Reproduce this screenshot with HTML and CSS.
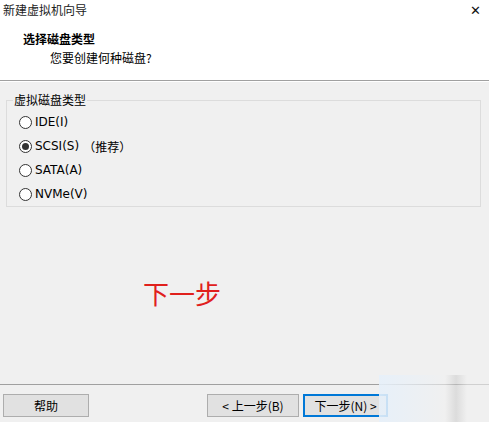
FILE: index.html
```html
<!DOCTYPE html>
<html lang="zh-CN">
<head>
    <meta charset="UTF-8">
    <title>新建虚拟机向导</title>
    <link rel="stylesheet" href="styles.css">
</head>
<body>
    <div class="dialog">
        <div class="top">
            <div class="titlebar">
                <span class="title">新建虚拟机向导</span>
                <span class="close">&#x2715;</span>
            </div>
            <div class="header">
                <div class="heading">选择磁盘类型</div>
                <div class="subheading">您要创建何种磁盘?</div>
            </div>
        </div>

        <div class="body">
            <fieldset class="group">
                <legend>虚拟磁盘类型</legend>
                <label class="option"><span class="radio"></span>IDE(I)</label>
                <label class="option"><span class="radio checked"></span>SCSI(S) <span class="note">（推荐）</span></label>
                <label class="option"><span class="radio"></span>SATA(A)</label>
                <label class="option"><span class="radio"></span>NVMe(V)</label>
            </fieldset>

            <div class="hint">下一步</div>
        </div>

        <div class="footer">
            <button class="btn help">帮助</button>
            <div class="nav">
                <button class="btn back">&lt; 上一步(B)</button>
                <button class="btn next">下一步(N) &gt;</button>
            </div>
            <div class="blur"></div>
        </div>
    </div>
</body>
</html>
```

FILE: styles.css
```css
* {
    box-sizing: border-box;
}

body {
    margin: 0;
    background-color: #f0f0f0;
    font-family: "Noto Sans CJK SC", "Liberation Sans", sans-serif;
    font-size: 12px;
    color: #000;
}

.dialog {
    width: 489px;
    height: 422px;
    display: flex;
    flex-direction: column;
    overflow: hidden;
}

.top {
    background-color: #fff;
    height: 81px;
    border-bottom: 1px solid #a0a0a0;
}

.titlebar {
    height: 22px;
    display: flex;
    justify-content: space-between;
    align-items: center;
    padding: 0 8px 4px 3px;
}

.title {
    font-size: 12px;
    color: #222;
}

.close {
    font-size: 13px;
    font-weight: 300;
    color: #111;
}

.header {
    padding: 9px 0 0 23px;
}

.heading {
    font-weight: bold;
    font-size: 12px;
    line-height: 16px;
}

.subheading {
    padding-left: 27px;
    line-height: 20px;
    margin-top: 1px;
}

.body {
    flex: 1;
    padding: 10px 8px 0 6px;
    border-top: 1px solid #fff;
}

.group {
    margin: 0;
    height: 115px;
    border: 1px solid #dcdcdc;
    padding: 2px 0 0 12px;
}

.group legend {
    padding: 0 1px;
    margin-left: -6px;
    line-height: 16px;
}

.option {
    display: flex;
    align-items: center;
    height: 24px;
    font-family: "DejaVu Sans", "Noto Sans CJK SC", sans-serif;
    font-size: 12px;
}

.radio {
    width: 13px;
    height: 13px;
    border: 1px solid #333;
    border-radius: 50%;
    background-color: #fff;
    margin-right: 3px;
    display: flex;
    align-items: center;
    justify-content: center;
}

.radio.checked::after {
    content: "";
    width: 7px;
    height: 7px;
    border-radius: 50%;
    background-color: #333;
}

.note {
    margin-left: 4px;
    font-family: "Noto Sans CJK SC", sans-serif;
}

.hint {
    margin: 69px 0 0 137px;
    color: #e0201c;
    font-size: 26px;
    line-height: 34px;
}

.footer {
    height: 38px;
    border-top: 1px solid #a0a0a0;
    display: flex;
    align-items: flex-start;
    padding: 9px 0 0 3px;
    position: relative;
}

.nav {
    display: flex;
    gap: 4px;
    margin-left: 118px;
}

.btn {
    height: 23px;
    background-color: #e1e1e1;
    border: 1px solid #adadad;
    font-family: inherit;
    font-size: 12px;
    padding: 0;
    color: #000;
}

.help {
    width: 86px;
}

.back {
    width: 92px;
}

.next {
    width: 85px;
    border: 2px solid #0078d7;
}

.blur {
    position: absolute;
    right: 0;
    top: -10px;
    width: 110px;
    height: 48px;
    background: linear-gradient(90deg, rgba(230, 240, 250, 0.9), rgba(240, 240, 240, 0.6) 60%, rgba(200, 200, 200, 0.5) 70%, rgba(240, 240, 240, 0.6) 80%);
}
```
